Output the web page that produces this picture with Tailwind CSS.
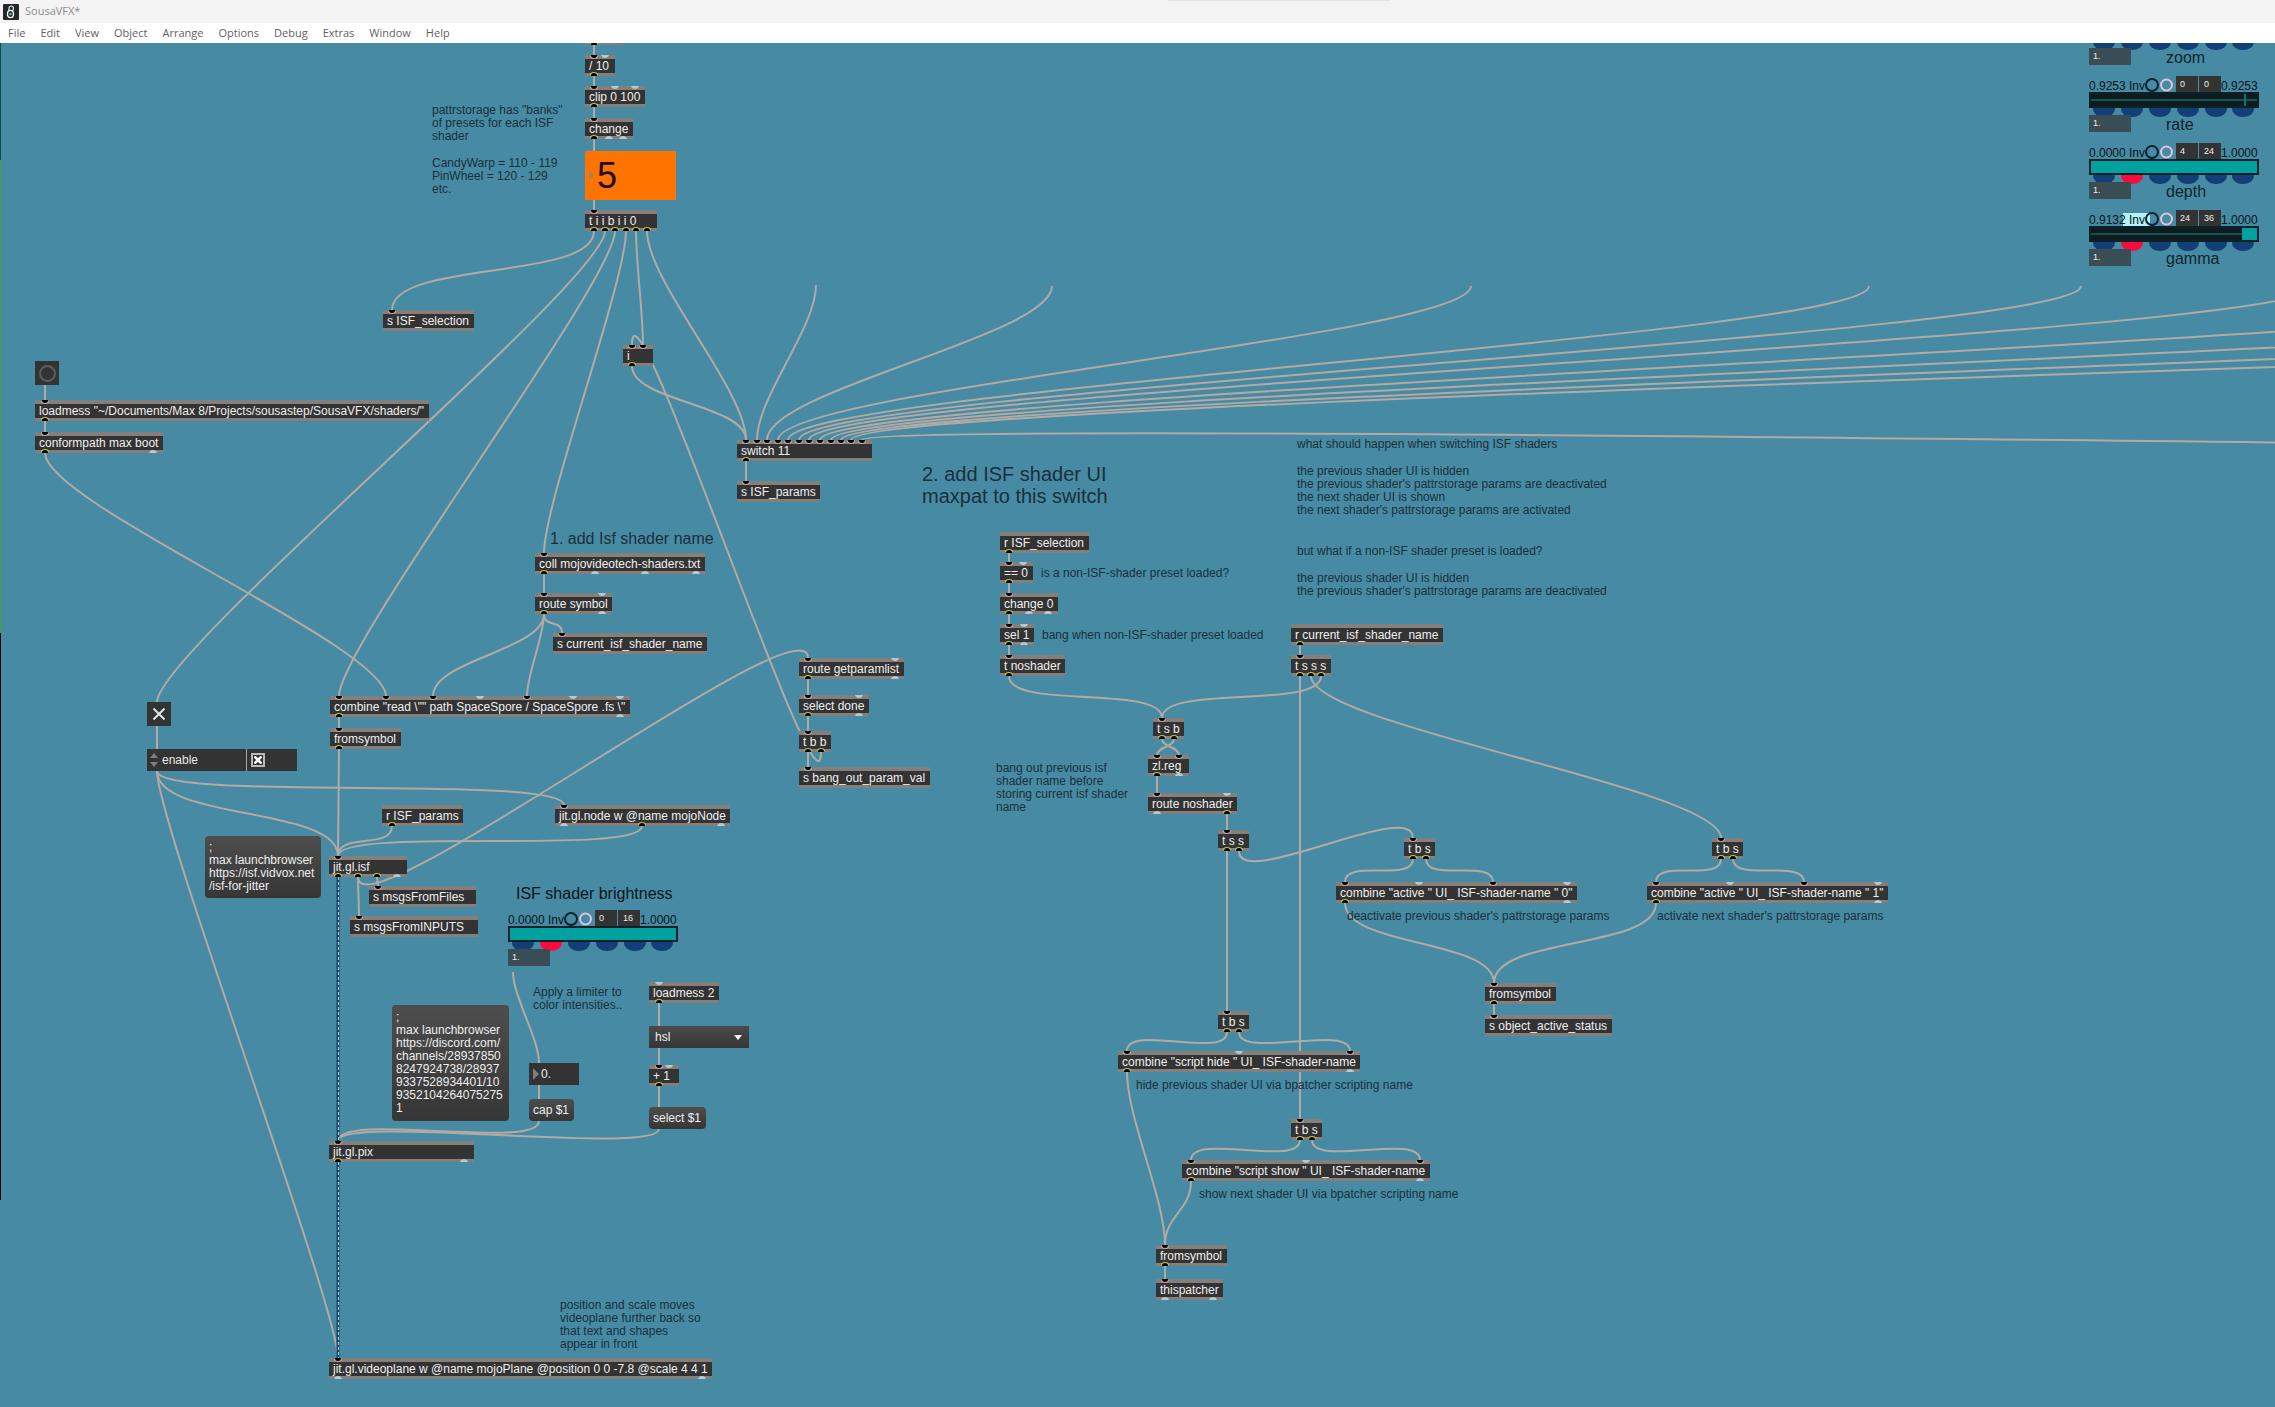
<!DOCTYPE html>
<html lang="en">
<head>
<meta charset="utf-8">
<title>SousaVFX*</title>
<script src="https://cdn.jsdelivr.net/npm/@tailwindcss/browser@4"></script>
</head>
<body class="flex min-h-screen flex-col bg-[#468ba3] font-['Liberation_Sans',Arial,sans-serif] text-xs">
<header class="relative z-10 font-['Open_Sans',sans-serif] text-[11px]">
  <div class="relative flex h-[23px] items-center gap-[6px] bg-[#f3f3f3] pl-[3px] text-[#8f8f8f]">
    <svg class="size-4" viewBox="0 0 16 16" aria-hidden="true"><rect width="16" height="16" rx="1" fill="#22282a"/><ellipse cx="7.500" cy="10" rx="3" ry="3.600" fill="none" stroke="#fff" stroke-width="1.300"/><path d="M6 6.500V4.200a2.200 2.200 0 0 1 4.400 0c0 1.500-.4 2.300-1.200 3" fill="none" stroke="#e8eeee" stroke-width="1.200"/><circle cx="7.500" cy="10" r="1.300" fill="#5fb3a8"/></svg>
    <span>SousaVFX*</span>
    <span class="absolute left-1/2 top-0 ml-[30px] h-px w-[222px] bg-[#e2e2e2]"></span>
  </div>
  <nav class="flex h-5 items-center gap-[15px] bg-white pl-2 text-[#5f5f5f]">
    <button>File</button><button>Edit</button><button>View</button><button>Object</button><button>Arrange</button><button>Options</button><button>Debug</button><button>Extras</button><button>Window</button><button>Help</button>
  </nav>
</header>

<main class="relative min-h-[1364px] flex-1 overflow-hidden">
  <!-- patcher canvas, scrolled so its first 43px lie under the title and menu bars -->
  <div id="canvas" class="absolute inset-x-0 -top-[43px] bottom-0">
    <div class="absolute left-0 top-0 flex h-[1200px] w-px flex-col bg-black"><i class="h-[160px] bg-[#0b5138]"></i><i class="h-[473px] bg-[#4f9f35]"></i></div>
    <svg id="cables" class="absolute inset-0 size-full" fill="none" stroke="#b3aaa5" stroke-width="2"></svg>

    <!-- comments -->
    <div class="absolute left-[432px] top-[104px] flex flex-col gap-[14px] whitespace-nowrap leading-[13px] text-[#1b2f3b]">
      <p>pattrstorage has "banks"<br>of presets for each ISF<br>shader</p>
      <p>CandyWarp = 110 - 119<br>PinWheel = 120 - 129<br>etc.</p>
    </div>
    <div class="absolute left-[1297px] top-[438px] flex flex-col gap-[14px] whitespace-nowrap leading-[13px] text-[#1b2f3b]">
      <p>what should happen when switching ISF shaders</p>
      <p class="pb-[14px]">the previous shader UI is hidden<br>the previous shader's pattrstorage params are deactivated<br>the next shader UI is shown<br>the next shader's pattrstorage params are activated</p>
      <p>but what if a non-ISF shader preset is loaded?</p>
      <p>the previous shader UI is hidden<br>the previous shader's pattrstorage params are deactivated</p>
    </div>
    <p class="absolute left-[1041px] top-[567px] whitespace-nowrap leading-[13px] text-[#1b2f3b]">is a non-ISF-shader preset loaded?</p>
    <p class="absolute left-[1042px] top-[629px] whitespace-nowrap leading-[13px] text-[#1b2f3b]">bang when non-ISF-shader preset loaded</p>
    <p class="absolute left-[996px] top-[762px] whitespace-nowrap leading-[13px] text-[#1b2f3b]">bang out previous isf<br>shader name before<br>storing current isf shader<br>name</p>
    <p class="absolute left-[1347px] top-[910px] whitespace-nowrap leading-[13px] text-[#1b2f3b]">deactivate previous shader's pattrstorage params</p>
    <p class="absolute left-[1657px] top-[910px] whitespace-nowrap leading-[13px] text-[#1b2f3b]">activate next shader's pattrstorage params</p>
    <p class="absolute left-[1136px] top-[1079px] whitespace-nowrap leading-[13px] text-[#1b2f3b]">hide previous shader UI via bpatcher scripting name</p>
    <p class="absolute left-[1199px] top-[1188px] whitespace-nowrap leading-[13px] text-[#1b2f3b]">show next shader UI via bpatcher scripting name</p>
    <p class="absolute left-[533px] top-[986px] whitespace-nowrap leading-[13px] text-[#1b2f3b]">Apply a limiter to<br>color intensities..</p>
    <p class="absolute left-[560px] top-[1299px] whitespace-nowrap leading-[13px] text-[#1b2f3b]">position and scale moves<br>videoplane further back so<br>that text and shapes<br>appear in front</p>
    <h2 class="absolute left-[550px] top-[530px] whitespace-nowrap text-base leading-[18px] text-[#1b2f3b]">1. add Isf shader name</h2>
    <h2 class="absolute left-[922px] top-[463px] whitespace-nowrap text-xl leading-[22px] text-[#1b2f3b]">2. add ISF shader UI<br>maxpat to this switch</h2>
    <h2 class="absolute left-[516px] top-[885px] whitespace-nowrap text-base leading-[18px] text-[#08141a]">ISF shader brightness</h2>

    <!-- number boxes, toggles and messages -->
    <label class="absolute left-[585px] top-[151px] flex h-[49px] w-[91px] items-center gap-[3px] bg-[#ff7300] pl-1">
      <svg class="h-[9px] w-[5px]" viewBox="0 0 5 9" aria-hidden="true"><path d="M0 0l5 4.500L0 9z" fill="#a3815a"/></svg>
      <input class="w-[70px] bg-transparent text-4xl text-[#240a1c] outline-none" value="5" aria-label="ISF bank">
    </label>
    <button class="absolute left-[35px] top-[361px] grid size-6 place-items-center bg-[#333]" aria-label="bang"><span class="size-[17px] rounded-full border-2 border-[#5d5d58]"></span></button>
    <label class="absolute left-[147px] top-[702px] grid size-6 place-items-center bg-[#333]">
      <input type="checkbox" checked class="absolute inset-0 appearance-none" aria-label="toggle">
      <svg class="size-3" viewBox="0 0 12 12" aria-hidden="true"><path d="M0.500 0.500l11 11M11.500 0.500l-11 11" stroke="#d9e6ea" stroke-width="2"/></svg>
    </label>
    <div class="absolute left-[147px] top-[749px] flex h-[22px] w-[150px] items-center bg-[#333] text-[#e6e6e6]">
      <svg class="ml-[3px] h-[14px] w-2" viewBox="0 0 8 14" aria-hidden="true"><path d="M4 0l4 5H0zM4 14l4-5H0z" fill="#7d7d7d"/></svg>
      <label for="enable" class="ml-1 w-[84px]">enable</label>
      <span class="h-full w-px bg-[#a9a9a9]"></span>
      <span class="relative ml-1 grid size-[14px] place-items-center border-2 border-[#b9b9b9]">
        <input id="enable" type="checkbox" checked class="absolute inset-0 appearance-none">
        <svg class="size-2" viewBox="0 0 8 8" aria-hidden="true"><path d="M0.500 0.500l7 7M7.500 0.500l-7 7" stroke="#fff" stroke-width="2.500"/></svg>
      </span>
    </div>
    <button class="absolute left-[205px] top-[836px] h-[62px] w-[116px] whitespace-nowrap rounded bg-linear-to-b from-[#4d4d4d] to-[#363636] px-1 text-left leading-[13px] text-[#eee]">;<br>max launchbrowser<br>https://isf.vidvox.net<br>/isf-for-jitter</button>
    <button class="absolute left-[392px] top-[1005px] h-[116px] w-[117px] whitespace-nowrap rounded bg-linear-to-b from-[#4d4d4d] to-[#363636] px-1 text-left leading-[13px] text-[#eee]">;<br>max launchbrowser<br>https://discord.com/<br>channels/28937850<br>8247924738/28937<br>9337528934401/10<br>9352104264075275<br>1</button>
    <label class="absolute left-[529px] top-[1063px] flex h-[22px] w-[50px] items-center gap-[2px] bg-[#333] pl-1 text-[#eee]">
      <svg class="h-3 w-[6px]" viewBox="0 0 6 12" aria-hidden="true"><path d="M0 0l6 6-6 6z" fill="#7d7d7d"/></svg>
      <input class="w-8 bg-transparent outline-none" value="0." aria-label="cap">
    </label>
    <button class="absolute left-[529px] top-[1099px] h-[22px] w-[45px] whitespace-nowrap rounded bg-linear-to-b from-[#4d4d4d] to-[#363636] px-1 text-left text-[#eee]">cap $1</button>
    <button class="absolute left-[649px] top-[1107px] h-[22px] w-[57px] whitespace-nowrap rounded bg-linear-to-b from-[#4d4d4d] to-[#363636] px-1 text-left text-[#eee]">select $1</button>
    <div class="absolute left-[649px] top-[1026px] h-[22px] w-[100px]">
      <select class="size-full appearance-none bg-linear-to-b from-[#4a4a4a] to-[#363636] pl-[6px] text-[#eee]" aria-label="color space"><option>hsl</option></select>
      <svg class="pointer-events-none absolute right-[7px] top-[9px] h-[5px] w-2" viewBox="0 0 8 5" aria-hidden="true"><path d="M0 0h8L4 5z" fill="#fff"/></svg>
    </div>

    <div id="ui-left" class="absolute left-[508px] top-[910px]"></div>
    <div id="ui-right" class="absolute left-[2089px] top-[9px] flex flex-col gap-[11px]"></div>

    <div id="objects"></div>
    <svg id="ports" class="pointer-events-none absolute inset-0 size-full"></svg>
  </div>
</main>

<script>
// [text, x, y, width, inlets, outlets]; a negative port position is an unconnected port
const objects = [
  ['', 585, 24, 38, [], [594]],
  ['/ 10', 585, 55, 30, [594, -605], [594]],
  ['clip 0 100', 585, 86, 60, [594, -615, -635], [594]],
  ['change', 585, 118, 48, [594], [594, -609, -623]],
  ['t i i b i i 0', 585, 210, 72, [594], [594, 605, 615, 626, 636, 647]],
  ['s ISF_selection', 383, 310, 91, [392], []],
  ['i', 623, 345, 30, [632, 643], [632]],
  ['loadmess "~/Documents/Max 8/Projects/sousastep/SousaVFX/shaders/"', 35, 400, 394, [45], [45]],
  ['conformpath max boot', 35, 432, 128, [45], [45, -153]],
  ['switch 11', 737, 440, 135, [746, 757, 767, 778, 788, 799, 809, 820, 831, 841, 851, 862], [746]],
  ['s ISF_params', 737, 481, 83, [746], []],
  ['coll mojovideotech-shaders.txt', 535, 553, 170, [544], [544, -595, -645, -696]],
  ['route symbol', 535, 593, 77, [544, -602], [544, -602]],
  ['s current_isf_shader_name', 553, 633, 154, [562], []],
  ['combine "read \\"" path SpaceSpore / SpaceSpore .fs \\"', 330, 696, 300, [339, 386, 433, -480, 527, -573, -620], [339, -620]],
  ['fromsymbol', 330, 728, 71, [339], [339]],
  ['r ISF_params', 382, 805, 81, [], [392]],
  ['jit.gl.node w @name mojoNode', 555, 805, 175, [564], [-564, 642, -721]],
  ['jit.gl.isf', 329, 856, 78, [338], [338, 358, 377, -397]],
  ['s msgsFromFiles', 369, 886, 107, [378], []],
  ['s msgsFromINPUTS', 350, 916, 128, [359], []],
  ['jit.gl.pix', 329, 1141, 145, [338], [338, -464]],
  ['jit.gl.videoplane w @name mojoPlane @position 0 0 -7.8 @scale 4 4 1', 329, 1358, 383, [338], [-338, -702]],
  ['loadmess 2', 649, 982, 70, [-659], [659]],
  ['+ 1', 649, 1065, 30, [659, -669], [659]],
  ['route getparamlist', 799, 658, 105, [808, -895], [808, -895]],
  ['select done', 799, 695, 70, [808, -859], [808, -859]],
  ['t b b', 799, 731, 32, [808], [808, 821]],
  ['s bang_out_param_val', 799, 767, 131, [808], []],
  ['r ISF_selection', 1000, 532, 89, [], [1009]],
  ['== 0', 1000, 562, 33, [1009, -1023], [1009]],
  ['change 0', 1000, 593, 58, [1009], [1009, -1029, -1048]],
  ['sel 1', 1000, 624, 34, [1009, -1024], [1009, -1024]],
  ['t noshader', 1000, 655, 65, [1009], [1009]],
  ['t s b', 1153, 718, 31, [1162], [1162, 1174]],
  ['zl.reg', 1148, 755, 41, [1157, 1179], [1157, -1179]],
  ['route noshader', 1148, 793, 89, [1157, -1227], [-1157, 1227]],
  ['t s s', 1218, 830, 31, [1227], [1227, 1239]],
  ['r current_isf_shader_name', 1291, 624, 152, [], [1300]],
  ['t s s s', 1291, 655, 40, [1300], [1300, 1311, 1321]],
  ['t b s', 1404, 838, 31, [1413], [1413, 1426]],
  ['t b s', 1712, 838, 31, [1721], [1721, 1733]],
  ['combine "active " UI_ ISF-shader-name " 0"', 1336, 882, 241, [1345, -1419, 1493, -1567], [1345, -1567]],
  ['combine "active " UI_ ISF-shader-name " 1"', 1647, 882, 241, [1656, -1730, 1804, -1878], [1656, -1878]],
  ['fromsymbol', 1485, 983, 71, [1494], [1494]],
  ['s object_active_status', 1485, 1015, 127, [1494], []],
  ['t b s', 1218, 1011, 31, [1227], [1227, 1239]],
  ['combine "script hide " UI_ ISF-shader-name', 1118, 1051, 242, [1127, -1239, 1350], [1127, -1350]],
  ['t b s', 1291, 1119, 31, [1300], [1300, 1312]],
  ['combine "script show " UI_ ISF-shader-name', 1182, 1160, 248, [1191, -1306, 1420], [1191, -1420]],
  ['fromsymbol', 1156, 1245, 71, [1165], [1165]],
  ['thispatcher', 1156, 1279, 67, [1165], [-1165, -1213]],
];

// [x1, y1, x2, y2, bend]; bend defaults to a share of the distance
const cables = [
  [594, 45, 594, 55], [594, 76, 594, 86], [594, 107, 594, 118], [594, 139, 594, 151], [594, 200, 594, 210],
  [594, 231, 392, 310], [605, 231, 157, 702], [615, 231, 339, 696], [626, 231, 544, 553], [636, 231, 643, 345], [647, 231, 746, 440],
  [632, 366, 746, 440], [821, 752, 632, 345, 88],
  [45, 385, 45, 400], [45, 421, 45, 432], [45, 453, 386, 696],
  [746, 461, 746, 481],
  [816, 285, 757, 440], [1052, 286, 767, 440], [1471, 286, 778, 440], [1869, 286, 788, 440], [2081, 286, 799, 440],
  [2317, 286, 809, 440], [2676, 286, 820, 440], [3070, 286, 831, 440], [3509, 286, 841, 440], [3930, 286, 851, 440],
  [4500, 454, 862, 440, 28],
  [544, 574, 544, 593], [544, 614, 433, 696], [544, 614, 527, 696], [544, 614, 562, 633, 14],
  [157, 726, 157, 749], [157, 771, 338, 856], [157, 771, 564, 805, 31], [157, 771, 338, 1358],
  [339, 717, 339, 728], [339, 749, 338, 856], [392, 826, 338, 856, 24], [642, 826, 338, 856, 30],
  [358, 877, 359, 916], [358, 877, 808, 658, 62], [377, 877, 378, 886],
  [513, 972, 539, 1063], [539, 1085, 539, 1099], [539, 1121, 338, 1141, 30], [659, 1129, 338, 1141, 27],
  [659, 1003, 659, 1026], [659, 1048, 659, 1065], [659, 1086, 659, 1107],
  [808, 679, 808, 695], [808, 716, 808, 731], [808, 752, 808, 767],
  [1009, 553, 1009, 562], [1009, 583, 1009, 593], [1009, 614, 1009, 624], [1009, 645, 1009, 655],
  [1009, 676, 1162, 718, 34], [1321, 676, 1162, 718, 34], [1311, 676, 1721, 838], [1300, 645, 1300, 655], [1300, 676, 1300, 1119],
  [1162, 739, 1179, 755, 8], [1174, 739, 1157, 755, 8], [1157, 776, 1157, 793], [1227, 814, 1227, 830],
  [1227, 851, 1227, 1011], [1239, 851, 1413, 838, 40],
  [1413, 859, 1345, 882, 24], [1426, 859, 1493, 882, 24], [1721, 859, 1656, 882, 24], [1733, 859, 1804, 882, 24],
  [1345, 903, 1494, 983], [1656, 903, 1494, 983], [1494, 1004, 1494, 1015],
  [1227, 1032, 1127, 1051, 28], [1239, 1032, 1350, 1051, 28],
  [1127, 1072, 1165, 1245], [1300, 1140, 1191, 1160, 28], [1312, 1140, 1420, 1160, 28],
  [1191, 1181, 1165, 1245, 30], [1165, 1266, 1165, 1279],
];
const videoCables = [[338, 877, 1141], [338, 1162, 1358]];

const cablePath = ([x1, y1, x2, y2, bend]) => {
  const d = bend ?? Math.min(50, Math.hypot(x2 - x1, y2 - y1) * 0.26);
  return `<path d="M${x1} ${y1}C${x1} ${y1 + d} ${x2} ${y2 - d} ${x2} ${y2}"/>`;
};
document.getElementById('cables').innerHTML = cables.map(cablePath).join('') +
  videoCables.map(([x, a, b]) => `<path d="M${x} ${a}V${b}" stroke="#1b4468" stroke-width="3"/><path d="M${x + 0.5} ${a}V${b}" stroke="#b4cbd8" stroke-width="1" stroke-dasharray="3 2"/>`).join('');

const objectsEl = document.getElementById('objects');
let ports = '';
for (const [text, x, y, w, ins, outs] of objects) {
  const el = document.createElement('div');
  el.className = 'absolute h-[21px] whitespace-nowrap border-t-4 border-b-[3px] border-[#857f7c] bg-[#333] pl-1 leading-[14px] text-[#f0f0f0]';
  el.style.left = x + 'px';
  el.style.top = y + 'px';
  el.style.width = w + 'px';
  el.textContent = text;
  objectsEl.append(el);
  for (const p of ins) {
    const cx = Math.abs(p);
    ports += p < 0
      ? `<path d="M${cx - 4} ${y}h8q-1 3-4 3t-4-3z" fill="#b9c8cc"/>`
      : `<path d="M${cx - 4} ${y + 1}q0 3 4 3t4-3z" fill="#c9a2a2"/><path d="M${cx - 3} ${y}h6q0 3-3 3t-3-3z" fill="#000"/>`;
  }
  for (const p of outs) {
    const cx = Math.abs(p), b = y + 21;
    ports += p < 0
      ? `<path d="M${cx - 4} ${b}h8q-1-3-4-3t-4 3z" fill="#b9c8cc"/>`
      : `<path d="M${cx - 4} ${b - 1}q0-3 4-3t4 3z" fill="#c3c34a"/><path d="M${cx - 3} ${b}h6q0-3-3-3t-3 3z" fill="#000"/>`;
  }
}
document.getElementById('ports').innerHTML = ports;

// modulation panel: value, invert, LFO range, slider and mode lamps
const readouts = ({ name, lo, hi, a, b, inv }) => `
      <span class="w-[34px]"><span class="relative z-10">${lo}</span></span>
      <button class="${inv ? 'bg-[#b4f3f6]' : ''} h-[13px] w-[22px] pl-[6px] text-left">Inv</button>
      <svg class="h-4 w-[31px]" viewBox="0 0 31 16" fill="none" stroke-width="2" aria-hidden="true">${inv ? '<path d="M0 3h5v13H0z" fill="#b4f3f6"/>' : ''}<circle cx="7" cy="9" r="6" stroke="#0b2230"/><circle cx="21.500" cy="9" r="5.500" stroke="#dcc3de"/></svg>
      <span class="flex h-4 gap-px">
        <input class="w-[22px] bg-[#333] pl-1 text-[9px] text-[#eee]" value="${a}" aria-label="${name} range start"><input class="w-[22px] bg-[#333] pl-[5px] text-[9px] text-[#eee]" value="${b}" aria-label="${name} range end">
      </span>
      <span>${hi}</span>`;
const panel = (p) => `
  <div class="relative h-14 w-[170px] whitespace-nowrap text-[#08141a]">
    <div class="flex h-4 items-end leading-3">${p.lo ? readouts(p) : ''}</div>
    <div class="relative z-10 h-4 border-2 border-[#0b2027] ${p.from === 0 ? 'bg-[#00a19f]' : 'bg-[#0e1c21]'}">
      ${p.from === 0 ? '' : '<i class="absolute inset-x-0 top-[5px] h-[2px] bg-[#14564c]"></i>'}
      ${p.from > 0 ? `<i class="absolute inset-y-0 right-0 bg-[#00a19f]" style="left:${p.from}%"></i>` : ''}
      ${p.mark ? `<i class="absolute inset-y-0 w-[2px] bg-[#0f7568]" style="left:${p.mark}%"></i>` : ''}
      <input type="range" class="absolute inset-0 size-full opacity-0" aria-label="${p.name}">
    </div>
    <svg class="absolute left-0 top-[26px] h-4 w-[170px]" viewBox="0 0 170 16" aria-hidden="true">
      ${[15, 43, 71, 99, 127, 154].map((x, i) => `<ellipse cx="${x}" cy="7" rx="11" ry="8" fill="${i === 1 && p.red ? '#ff0a3c' : '#133f77'}"/>`).join('')}
    </svg>
    <div class="absolute left-0 top-[39px] z-10 flex h-[17px]">
      <input class="w-[42px] bg-[#3b4d54] pb-[1px] pl-1 text-[9px] text-[#eee]" value="1." aria-label="${p.name} multiplier">
    </div>
    <span class="absolute left-[77px] top-10 text-base leading-[18px] text-[#12242d]">${p.label ?? ''}</span>
  </div>`;
document.getElementById('ui-left').innerHTML =
  panel({ name: 'ISF brightness', lo: '0.0000', hi: '1.0000', a: 0, b: 16, from: 0, red: true });
document.getElementById('ui-right').innerHTML = [
  { name: 'zoom', label: 'zoom', from: 0 },
  { name: 'rate', label: 'rate', lo: '0.9253', hi: '0.9253', a: 0, b: 0, from: -1, mark: 92 },
  { name: 'depth', label: 'depth', lo: '0.0000', hi: '1.0000', a: 4, b: 24, from: 0, red: true },
  { name: 'gamma', label: 'gamma', lo: '0.9132', hi: '1.0000', a: 24, b: 36, from: 91, red: true, inv: true },
].map(panel).join('');
</script>
</body>
</html>
